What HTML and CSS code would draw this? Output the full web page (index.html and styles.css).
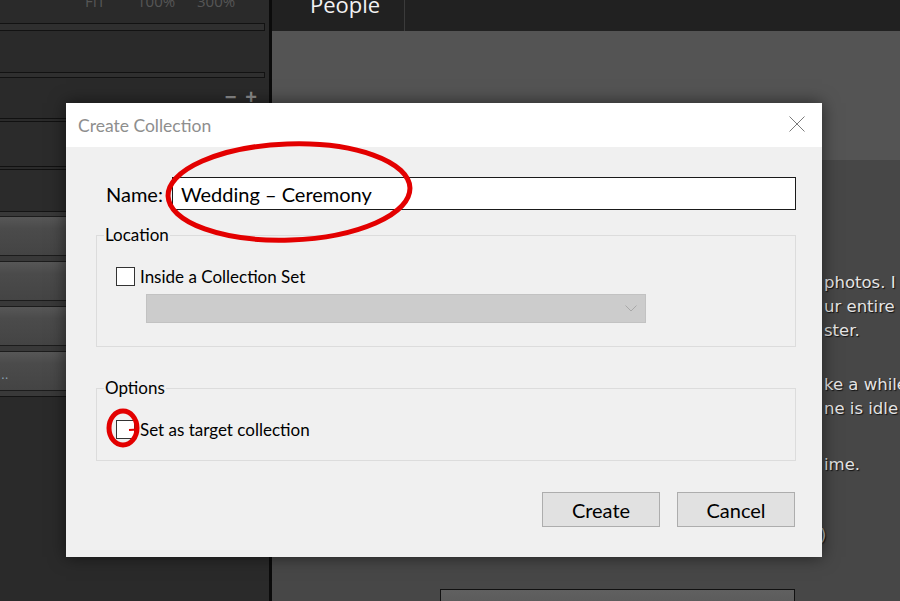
FILE: index.html
```html
<!DOCTYPE html>
<html lang="en">
<head>
    <meta charset="UTF-8">
    <meta name="viewport" content="width=device-width, initial-scale=1.0">
    <title>Create Collection</title>
    <link rel="stylesheet" href="styles.css">
</head>
<body>
    <div class="app">
        <div class="side">
            <div class="zoom-row"><span class="zoom-fit">FIT</span><span class="zoom-100">100%</span><span>300%</span></div>
            <div class="slot"></div>
            <div class="slot slot-second"></div>
            <div class="plus-minus"><span>&minus;</span><span>+</span></div>
            <div class="side-row"></div>
            <div class="side-row side-row-short"></div>
            <div class="side-btns">
                <div class="side-btn"></div>
                <div class="side-btn"></div>
                <div class="side-btn"></div>
                <div class="side-btn"><span class="dots">..</span></div>
            </div>
        </div>

        <div class="main">
            <div class="topbar">
                <div class="tab">People</div>
            </div>
            <div class="banner"></div>
            <div class="info">
                <p>photos. I<br>ur entire<br>ster.</p>
                <p class="para-2">ke a while<br>ne is idle</p>
                <p class="para-3">ime.</p>
                <p class="para-4">)</p>
                <div class="main-btn"></div>
            </div>
        </div>
    </div>

    <div class="dialog">
        <div class="dialog-title">
            <span>Create Collection</span>
            <svg class="close" width="16" height="16" viewBox="0 0 16 16">
                <path d="M0.5 0.5 L15.5 15.5 M15.5 0.5 L0.5 15.5" stroke="#7a7a7a" stroke-width="1" fill="none"/>
            </svg>
        </div>
        <div class="dialog-body">
            <div class="name-row">
                <label>Name:</label>
                <div class="name-input">Wedding &ndash; Ceremony</div>
            </div>

            <fieldset class="group">
                <legend>Location</legend>
                <div class="check-row">
                    <span class="check"></span>
                    <span>Inside a Collection Set</span>
                </div>
                <div class="select">
                    <svg width="12" height="7" viewBox="0 0 12 7">
                        <path d="M0.5 0.5 L6 6 L11.5 0.5" stroke="#a8a8a8" stroke-width="1" fill="none"/>
                    </svg>
                </div>
            </fieldset>

            <fieldset class="group group-options">
                <legend>Options</legend>
                <div class="check-row">
                    <span class="check"></span>
                    <span>Set as target collection</span>
                </div>
            </fieldset>

            <div class="actions">
                <button class="btn">Create</button>
                <button class="btn">Cancel</button>
            </div>
        </div>
    </div>

    <!-- red marks drawn over the screenshot -->
    <svg class="marks" width="900" height="601" viewBox="0 0 900 601">
        <ellipse cx="289" cy="192" rx="121" ry="48" transform="rotate(-2 289 192)" fill="none" stroke="#e30000" stroke-width="5"/>
        <ellipse cx="123" cy="428" rx="14" ry="17" fill="none" stroke="#e30000" stroke-width="5"/>
        <line x1="129" y1="430" x2="138" y2="429.5" stroke="#e30000" stroke-width="2"/>
    </svg>
</body>
</html>
```

FILE: styles.css
```css
body {
    margin: 0;
    width: 900px;
    height: 601px;
    overflow: hidden;
    position: relative;
    background-color: #474747;
}
.app {
    display: flex;
    height: 601px;
}
.side {
    width: 269px;
    flex-shrink: 0;
    background-color: #2a2a2a;
    border-right: 3px solid #0b0b0b;
}
.zoom-row {
    height: 23px;
    overflow: hidden;
    display: flex;
    padding-left: 85px;
    font-family: "Open Sans", sans-serif;
    font-size: 15px;
    line-height: 15px;
    color: #565656;
}
.zoom-row span {
    margin-top: -6px;
}
.zoom-fit {
    width: 52px;
}
.zoom-100 {
    width: 60px;
}
.slot {
    height: 6px;
    margin-right: 4px;
    border: 1px solid #121212;
    border-left: none;
    background-color: #2f2f2f;
}
.slot-second {
    height: 4px;
    margin-top: 41px;
}
.plus-minus {
    height: 40px;
    display: flex;
    justify-content: flex-end;
    align-items: flex-start;
    gap: 9px;
    padding-right: 12px;
    font-family: "Liberation Sans", sans-serif;
    font-size: 20px;
    font-weight: bold;
    line-height: 20px;
    color: #8c8c8c;
}
.plus-minus span {
    margin-top: 9px;
}
.side-row {
    height: 44px;
    border-top: 4px double #111111;
    background-color: #2b2b2b;
}
.side-row-short {
    height: 41px;
}
.side-btns {
    display: flex;
    flex-direction: column;
    gap: 5px;
    padding: 4px 0 5px;
    border-top: 1px solid #141414;
    border-bottom: 1px solid #141414;
    background-color: #393939;
}
.side-btn {
    height: 38px;
    border-top: 1px solid #1c1c1c;
    border-bottom: 1px solid #1c1c1c;
    background: linear-gradient(#575757, #4b4b4b 30%, #444444);
    position: relative;
}
.dots {
    position: absolute;
    left: 1px;
    top: 16px;
    font-family: "DejaVu Sans", sans-serif;
    font-size: 12px;
    color: #8fa3b5;
}
.main {
    flex: 1;
    background-color: #474747;
}
.topbar {
    height: 31px;
    background-color: #212121;
    display: flex;
}
.tab {
    width: 133px;
    border-right: 1px solid #3b3b3b;
    box-sizing: border-box;
    padding-left: 38px;
    overflow: hidden;
    font-family: "Open Sans", sans-serif;
    font-size: 22px;
    line-height: 22px;
    color: #f2f2f2;
    margin-top: -7px;
}
.banner {
    height: 129px;
    background-color: #545454;
}
.info {
    padding-left: 552px;
    padding-top: 111px;
    font-family: "DejaVu Sans", sans-serif;
    font-size: 16.5px;
    line-height: 24px;
    color: #e4e4e4;
    text-shadow: 1px 1px 1px #111111;
    white-space: nowrap;
}
.info p {
    margin: 0;
}
.para-2 {
    padding-top: 30px;
}
.para-3 {
    padding-top: 32px;
}
.info .para-4 {
    padding-top: 46px;
    margin-left: -4px;
    color: #b5b5b5;
}
.main-btn {
    margin-left: -384px;
    margin-top: 42px;
    width: 353px;
    height: 30px;
    border: 1px solid #111111;
    background: linear-gradient(#606060, #555555);
}

/* dialog */
.dialog {
    position: absolute;
    left: 66px;
    top: 103px;
    width: 756px;
    height: 454px;
    background-color: #f0f0f0;
    box-shadow: 0 0 16px rgba(0, 0, 0, 0.55);
    font-family: "Lato", sans-serif;
    color: #000000;
}
.dialog-title {
    height: 44px;
    background-color: #ffffff;
    display: flex;
    align-items: center;
    justify-content: space-between;
    padding: 0 17px 0 12px;
    font-size: 17.5px;
    color: #8e8e8e;
}
.close {
    display: block;
    margin-top: -2px;
}
.dialog-body {
    padding: 30px 26px 0 30px;
}
.name-row {
    display: flex;
    align-items: center;
    gap: 9px;
    padding-left: 10px;
    font-size: 20px;
}
.name-input {
    flex: 1;
    height: 33px;
    box-sizing: border-box;
    border: 1px solid #1a1a1a;
    background-color: #ffffff;
    padding-left: 8px;
    display: flex;
    align-items: center;
    font-size: 20px;
}
.group {
    margin: 14px 0 0;
    padding: 0 0 23px 19px;
    border: 1px solid #dcdcdc;
    font-size: 17px;
}
.group legend {
    margin-left: -12px;
    padding: 0 1px;
    line-height: 22px;
}
.group-options {
    margin-top: 30px;
    padding-bottom: 21px;
}
.check-row {
    display: flex;
    align-items: center;
    gap: 5px;
    margin-top: 21px;
    height: 19px;
}
.check {
    width: 19px;
    height: 19px;
    box-sizing: border-box;
    border: 1px solid #333333;
    background-color: #ffffff;
}
.select {
    margin: 8px 0 0 30px;
    width: 500px;
    height: 29px;
    box-sizing: border-box;
    border: 1px solid #c2c2c2;
    background-color: #cccccc;
    display: flex;
    justify-content: flex-end;
    align-items: center;
    padding-right: 8px;
}
.select svg {
    display: block;
}
.actions {
    display: flex;
    justify-content: flex-end;
    gap: 17px;
    margin-top: 31px;
    padding-right: 1px;
}
.btn {
    width: 118px;
    height: 35px;
    border: 1px solid #adadad;
    background-color: #e1e1e1;
    font-family: "Lato", sans-serif;
    font-size: 20px;
    color: #000000;
    padding: 0;
}
.marks {
    position: absolute;
    left: 0;
    top: 0;
    pointer-events: none;
}
```
